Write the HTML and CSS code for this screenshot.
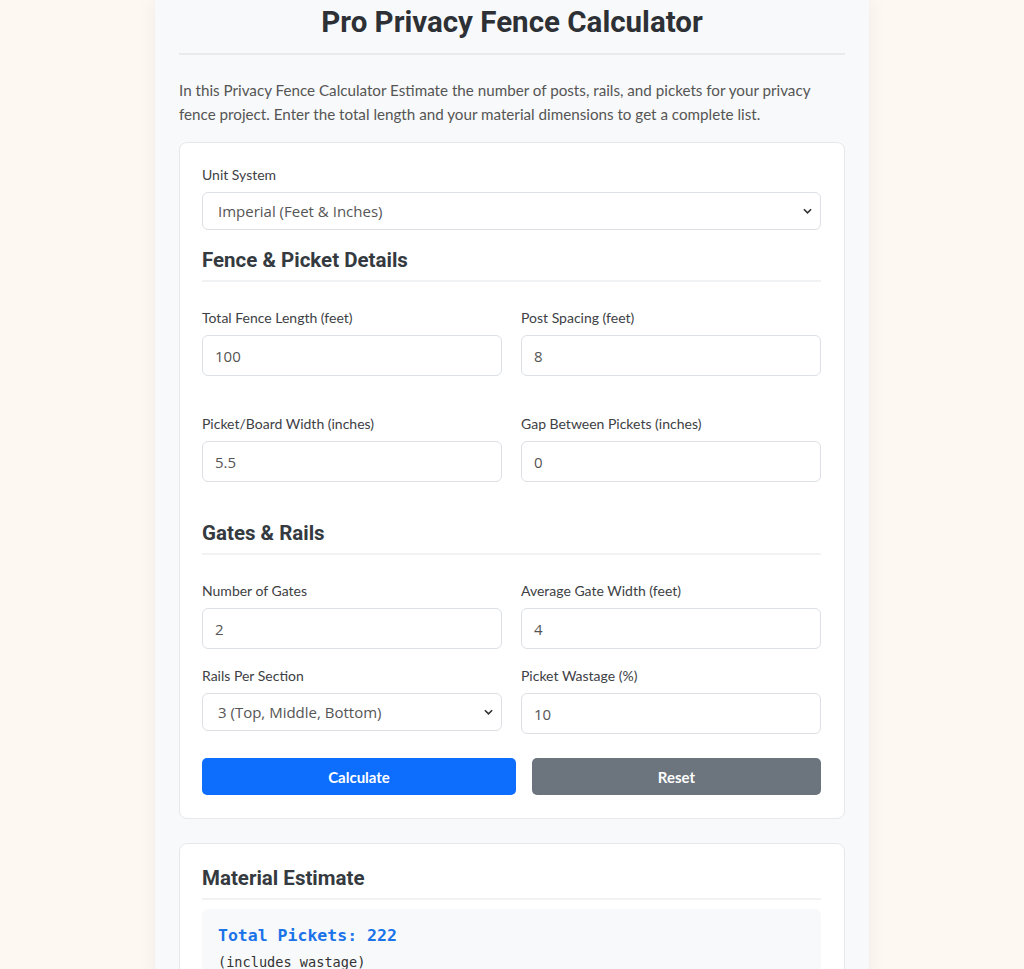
FILE: index.html
```html
<!DOCTYPE html>
<html lang="en">
<head>
<meta charset="utf-8">
<title>Pro Privacy Fence Calculator</title>
<link rel="stylesheet" href="styles.css">
</head>
<body>
<main class="wrap">
  <h1 class="title">Pro Privacy Fence Calculator</h1>
  <p class="intro">In this Privacy Fence Calculator Estimate the number of posts, rails, and pickets for your privacy fence project. Enter the total length and your material dimensions to get a complete list.</p>

  <section class="card">
    <div class="field">
      <label class="label">Unit System</label>
      <div class="select"><span>Imperial (Feet &amp; Inches)</span><svg class="chev" viewBox="0 0 10 6" width="9" height="6"><path d="M1 1l4 4 4-4" fill="none" stroke="#333" stroke-width="1.8"/></svg></div>
    </div>

    <h3 class="sec">Fence &amp; Picket Details</h3>
    <div class="grid gap-big">
      <div class="field"><label class="label">Total Fence Length (feet)</label><div class="input">100</div></div>
      <div class="field"><label class="label">Post Spacing (feet)</label><div class="input">8</div></div>
      <div class="field"><label class="label">Picket/Board Width (inches)</label><div class="input">5.5</div></div>
      <div class="field"><label class="label">Gap Between Pickets (inches)</label><div class="input">0</div></div>
    </div>

    <h3 class="sec sec2">Gates &amp; Rails</h3>
    <div class="grid">
      <div class="field"><label class="label">Number of Gates</label><div class="input">2</div></div>
      <div class="field"><label class="label">Average Gate Width (feet)</label><div class="input">4</div></div>
      <div class="field"><label class="label">Rails Per Section</label><div class="select short"><span>3 (Top, Middle, Bottom)</span><svg class="chev" viewBox="0 0 10 6" width="9" height="6"><path d="M1 1l4 4 4-4" fill="none" stroke="#333" stroke-width="1.8"/></svg></div></div>
      <div class="field"><label class="label">Picket Wastage (%)</label><div class="input">10</div></div>
    </div>

    <div class="actions">
      <button class="btn primary">Calculate</button>
      <button class="btn secondary">Reset</button>
    </div>
  </section>

  <section class="card results">
    <h3 class="sec">Material Estimate</h3>
    <div class="result-box">
      <div class="total">Total Pickets: 222</div>
      <div class="note">(includes wastage)</div>
    </div>
  </section>
</main>
</body>
</html>
```

FILE: styles.css
```css
* { box-sizing: border-box; }
html, body { margin: 0; padding: 0; }
body {
  background: #fdf8f2;
  font-family: "Lato", "Liberation Sans", sans-serif;
  color: #333;
}
.wrap {
  width: 714px;
  margin: 0 auto;
  padding: 2px 24px 40px;
  background: #f8f9fa;
  box-shadow: 0 0 18px rgba(0,0,0,0.06);
  min-height: 1100px;
}
.title {
  font-family: "Roboto", "Liberation Sans", sans-serif;
  font-weight: 700;
  font-size: 29.5px;
  line-height: 40px;
  text-align: center;
  color: #2d3136;
  margin: 0;
  padding-bottom: 11px;
  border-bottom: 2px solid #e9ecef;
}
.intro {
  font-size: 15.2px;
  line-height: 24px;
  color: #555;
  margin: 23px 0 16px;
}
.card {
  background: #fff;
  border: 1px solid #e6e8eb;
  border-radius: 8px;
  padding: 23px 23px 23px 22px;
}
.field { display: flex; flex-direction: column; }
.label {
  font-size: 14px;
  line-height: 18px;
  color: #3d4145;
  margin-bottom: 8px;
}
.select, .input {
  border: 1px solid #dcdfe3;
  border-radius: 6px;
  background: #fff;
  font-family: "Open Sans", "Liberation Sans", sans-serif;
  font-size: 15px;
  color: #555;
  display: flex;
  align-items: center;
  padding: 0 15px 0 15px;
}
.select { height: 38px; justify-content: space-between; padding-right: 8px; }
.input { height: 41px; padding-left: 12px; }
.chev { display: block; }
.sec {
  font-family: "Roboto", "Liberation Sans", sans-serif;
  font-weight: 700;
  font-size: 20.5px;
  line-height: 26px;
  color: #343a40;
  margin: 17px 0 27px;
  padding-bottom: 7px;
  border-bottom: 2px solid #f0f2f4;
}
.sec2 { margin-top: 38px; }
.grid {
  display: grid;
  grid-template-columns: 1fr 1fr;
  column-gap: 19px;
  row-gap: 18px;
}
.gap-big { row-gap: 39px; }
.actions {
  display: grid;
  grid-template-columns: 314fr 289fr;
  gap: 16px;
  margin-top: 24px;
}
.btn {
  height: 37px;
  border: none;
  border-radius: 5px;
  color: #fff;
  font-family: "Lato", "Liberation Sans", sans-serif;
  font-weight: 700;
  font-size: 15px;
}
.primary { background: #0d6efd; }
.secondary { background: #6c757d; }
.results { margin-top: 24px; padding-top: 21px; }
.results .sec { margin: 0 0 9px; }
.result-box {
  background: #f8f9fa;
  border-radius: 6px;
  padding: 16px 16px 18px;
  font-family: "DejaVu Sans Mono", "Liberation Mono", monospace;
}
.total {
  color: #1a73e8;
  font-weight: 700;
  font-size: 16.5px;
  line-height: 22px;
}
.note {
  font-size: 13.6px;
  line-height: 20px;
  color: #333;
  margin-top: 5px;
}
```
